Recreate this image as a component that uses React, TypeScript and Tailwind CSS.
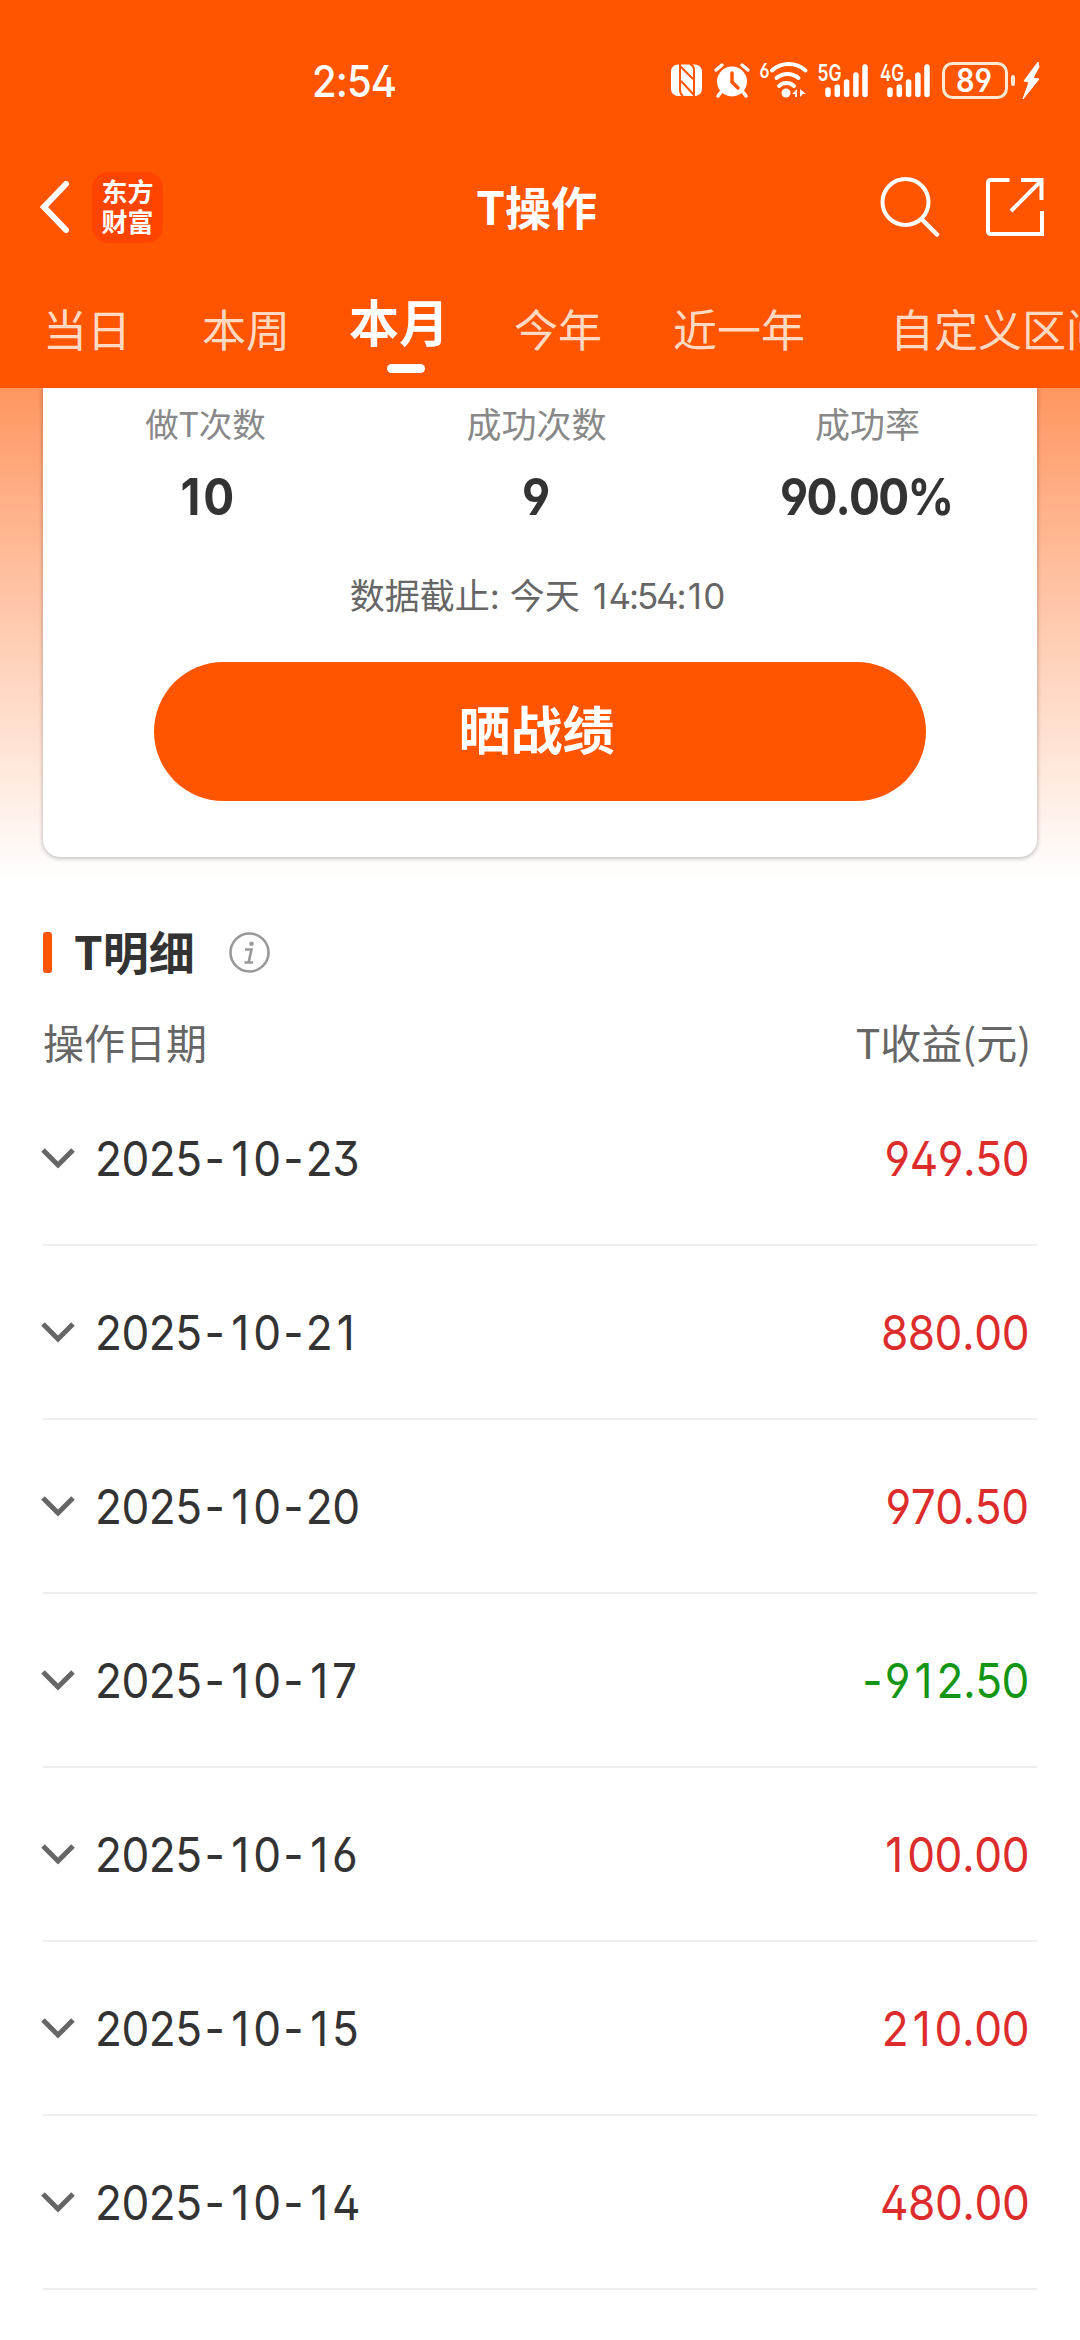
import React from "react";

const tabs = [
  { label: "当日", className: "w-[159px]" },
  { label: "本周", className: "w-[147px]" },
];

const stats = [
  { label: "做T次数", value: "10", className: "text-[33.500px]" },
  { label: "成功次数", value: "9", className: "text-[35px]" },
  { label: "成功率", value: "90.00%", className: "text-[35px]" },
];

const records = [
  { date: "2025-10-23", profit: "949.50" },
  { date: "2025-10-21", profit: "880.00" },
  { date: "2025-10-20", profit: "970.50" },
  { date: "2025-10-17", profit: "-912.50" },
  { date: "2025-10-16", profit: "100.00" },
  { date: "2025-10-15", profit: "210.00" },
  { date: "2025-10-14", profit: "480.00" },
];

// gives "1" and "-" some extra room so that the numbers line up
function Digits({ value }: { value: string }) {
  return (
    <>
      {value.split(/([1-])/).map((part, i) => {
        if (part === "1") return <span key={i} className="px-[0.1em]">{part}</span>;
        if (part === "-") return <span key={i} className="px-[0.060em]">{part}</span>;
        return part;
      })}
    </>
  );
}

function StatusIcons() {
  return (
    <svg className="w-[380px] h-[40px]" viewBox="665 60 380 40" fill="none">
      {/* nfc */}
      <rect x="671" y="64.500" width="31" height="31.500" rx="7" fill="#fff" />
      <path d="M680 64v26q0 4 3 6M680 66l13 13M690 64q4 2 4 6v26M681 81l13 14" stroke="#ff5500" strokeWidth="2" />
      {/* alarm */}
      <circle cx="732" cy="81.500" r="15" fill="#fff" />
      <path d="M716 70l6-5M748 70l-6-5M721 92l-3 4M743 92l3 4" stroke="#fff" strokeWidth="3.500" strokeLinecap="round" />
      <path d="M732 73v9l6 6" stroke="#ff5500" strokeWidth="3.500" strokeLinecap="round" />
      {/* wifi */}
      <text x="759.500" y="78" fill="#fff" fontSize="20" fontWeight="600" textLength="10" lengthAdjust="spacingAndGlyphs">6</text>
      <path d="M772 71.500a25 25 0 0 1 33.500 0M776.500 79a17 17 0 0 1 22 0" stroke="#fff" strokeWidth="4" strokeLinecap="round" transform="translate(0 -1)" />
      <path d="M779 86a11 11 0 0 1 15 0" stroke="#fff" strokeWidth="4" strokeLinecap="round" />
      <circle cx="786" cy="93" r="4.500" fill="#fff" />
      <path d="M792 94l5-5v8h-2v-3zM800 97v-8l6 5h-3z" fill="#fff" />
      {/* signals */}
      <text x="817.500" y="80.500" fill="#fff" fontSize="23" fontWeight="600" textLength="24" lengthAdjust="spacingAndGlyphs">5G</text>
      <path d="M828 90v4.500M837.300 87v7.500M846.600 82v12.500M855.900 75v19.500M865 67v27.500" stroke="#fff" strokeWidth="5.500" strokeLinecap="round" />
      <text x="880" y="80.500" fill="#fff" fontSize="23" fontWeight="600" textLength="24" lengthAdjust="spacingAndGlyphs">4G</text>
      <path d="M890 90v4.500M899.300 87v7.500M908.600 82v12.500M917.900 75v19.500M927 67v27.500" stroke="#fff" strokeWidth="5.500" strokeLinecap="round" />
      {/* battery */}
      <rect x="943.500" y="63.500" width="63" height="34" rx="9" stroke="#ffe9d2" strokeWidth="3" />
      <text x="956" y="92" fill="#fff" fontSize="32" fontWeight="600" textLength="36" lengthAdjust="spacingAndGlyphs">89</text>
      <rect x="1011" y="75" width="4" height="11" rx="2" fill="#ffe9d2" />
      <path d="M1038 62l-14 19 5 1-6 17 16-20-6-1 6-11z" fill="#fff" stroke="#fff" strokeLinejoin="round" />
    </svg>
  );
}

function Header() {
  return (
    <header className="h-[388px] bg-[#ff5500] text-white overflow-hidden">
      <div className="h-[158px] pt-[60px] pl-[312px] pr-[35px] flex items-start justify-between">
        <span className="text-[44px] leading-[42px] font-medium origin-left scale-x-[0.91] tracking-[-1px]">2:54</span>
        <StatusIcons />
      </div>
      <div className="h-[98px] pl-[40px] pr-[36px] flex items-center font-['Noto_Sans_CJK_SC',sans-serif]">
        <svg className="w-[30px] h-[54px]" viewBox="0 0 30 54" fill="none">
          <path d="M26 4L4 27l22 23" stroke="#fff" strokeWidth="6" strokeLinecap="round" />
        </svg>
        <div className="ml-[22px] pb-[3px] w-[71px] h-[71px] rounded-[16px] bg-[#ff4400] flex flex-col items-center justify-center text-[26px] leading-[30px] font-bold">
          <span>东方</span>
          <span>财富</span>
        </div>
        <h1 className="flex-1 pl-[30px] pb-[5px] text-center text-[46px] leading-[60px] font-bold">T操作</h1>
        <svg className="w-[60px] h-[60px]" viewBox="881 178 60 60" fill="none">
          <circle cx="906.500" cy="203" r="23" stroke="#fff" strokeWidth="4" />
          <path d="M922.500 220l15.500 15.500" stroke="#fff" strokeWidth="4.500" strokeLinecap="round" />
        </svg>
        <svg className="ml-[46px] w-[58px] h-[58px]" viewBox="987 178 58 58" fill="none" stroke="#fff" strokeWidth="4">
          <path d="M1010.500 180H992q-3 0-3 3v48q0 3 3 3h51v-23M1022 180h20.500v20M1042 181l-30 30" />
        </svg>
      </div>
      <nav className="h-[132px] pl-[43px] flex items-start whitespace-nowrap text-[44px] leading-[60px] text-[#ffd9c2] pt-[45px]">
        {tabs.map((tab) => (
          <span key={tab.label} className={`shrink-0 ${tab.className}`}>{tab.label}</span>
        ))}
        <div className="w-[152px] shrink-0 -mt-[7px] flex flex-col text-white">
          <span className="text-[50px] leading-[60px] font-bold">本月</span>
          <span className="ml-[38px] mt-[10px] w-[38px] h-[9px] rounded-full bg-white" />
        </div>
        <span className="ml-[13px] w-[159px] shrink-0">今年</span>
        <span className="w-[217px] shrink-0">近一年</span>
        <span className="shrink-0">自定义区间</span>
      </nav>
    </header>
  );
}

function Summary() {
  return (
    <section className="h-[512px] px-[43px] overflow-hidden bg-linear-to-b from-[#ff9660] to-white to-96%">
      <div className="h-[469px] pr-[7px] rounded-b-[17px] bg-white shadow-[0_1px_5px_rgba(0,0,0,0.3)] flex flex-col items-center">
        <div className="self-stretch -mx-[3px] pt-[11px] grid grid-cols-3">
          {stats.map((stat) => (
            <div key={stat.label} className="text-center">
              <div className={`leading-[48px] text-[#888] font-['Noto_Sans_CJK_SC',sans-serif] ${stat.className}`}>{stat.label}</div>
              <div className="mt-[22px] pr-[3px] text-[51px] leading-[56px] font-bold text-[#333] scale-x-[0.9] tracking-[-2px]">
                <Digits value={stat.value} />
              </div>
            </div>
          ))}
        </div>
        <div className="mt-[47px] text-[35px] leading-[48px] text-[#666]">
          数据截止: 今天 <span className="tracking-[-2.200px]"><Digits value="14:54:10" /></span>
        </div>
        <button className="ml-[7px] mt-[42px] pr-[7px] w-[772px] h-[139px] rounded-full bg-[#ff5500] text-[52px] font-bold text-white">晒战绩</button>
      </div>
    </section>
  );
}

function Details() {
  return (
    <section className="px-[43px]">
      <div className="h-[105px] flex items-center">
        <span className="w-[9px] h-[41px] rounded-[3px] bg-[#ff5500]" />
        <h2 className="ml-[22px] pb-[6px] w-[122px] text-[46px] leading-[60px] font-bold text-[#333] font-['Noto_Sans_CJK_SC',sans-serif]">T明细</h2>
        <svg className="ml-[33px] w-[41px] h-[41px]" viewBox="0 0 41 41" fill="none" stroke="#999" strokeWidth="2.600">
          <circle cx="20.500" cy="20.500" r="19" />
          <path d="M16 17.500h6.500l-2.500 11q-.5 2 1.500 2M15.500 30.500h8.500" />
          <circle cx="22.500" cy="11.800" r="1" fill="#999" />
        </svg>
      </div>
      <div className="h-[67px] pr-[6px] flex justify-between text-[41px] leading-[72px] text-[#666] font-['Noto_Sans_CJK_SC',sans-serif]">
        <span>操作日期</span>
        <span>T收益(元)</span>
      </div>
      {records.map((record) => (
        <div key={record.date} className="h-[174px] pt-[2px] pr-[8px] flex items-center border-b-2 border-[#eee] text-[48px] leading-[60px] tracking-[-0.500px]">
          <svg className="-ml-[2px] w-[34px] h-[22px]" viewBox="0 0 34 22" fill="none">
            <path d="M2 2l15 15L32 2" stroke="#666" strokeWidth="5" />
          </svg>
          <span className="ml-[20px] text-[#333] origin-left scale-x-[0.92]"><Digits value={record.date} /></span>
          <span className={record.profit.startsWith("-") ? "ml-auto text-[#149614] origin-right scale-x-[0.92]" : "ml-auto text-[#dd2c2c] origin-right scale-x-[0.92]"}>
            <Digits value={record.profit} />
          </span>
        </div>
      ))}
    </section>
  );
}

export default function App() {
  return (
    <div className="w-[1080px] h-[2340px] overflow-hidden bg-white font-[Inter,'Noto_Sans_CJK_SC',sans-serif] [font-feature-settings:'ss01','kern'_0]">
      <Header />
      <Summary />
      <Details />
    </div>
  );
}
